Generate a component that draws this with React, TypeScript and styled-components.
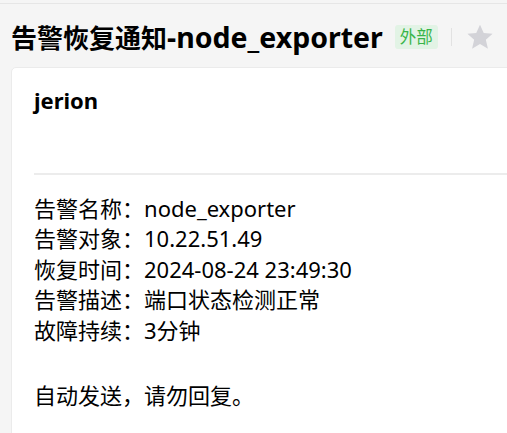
import React from 'react';
import styled, { createGlobalStyle } from 'styled-components';

const GlobalStyle = createGlobalStyle`
  html, body {
    margin: 0;
    padding: 0;
    background: #f5f5f5;
    overflow: hidden;
  }
  body {
    font-family: "Noto Sans", "Noto Sans CJK SC", sans-serif;
    color: #000;
  }
`;

const Page = styled.div`
  border-top: 1px solid #e6e6e6;
  margin-top: 3px;
  height: 430px;
  overflow: hidden;
`;

const Header = styled.div`
  display: flex;
  align-items: center;
  padding: 15px 11px 0 11px;
  height: 36px;

  & > * {
    flex-shrink: 0;
  }
`;

const Title = styled.h1`
  margin: 0;
  font-size: 26px;
  font-weight: 700;
  line-height: 36px;
  white-space: nowrap;
`;

// latin part of the subject renders wider than the CJK part
const TitleLatin = styled.span`
  font-size: 28.5px;
`;

const Badge = styled.span`
  margin-left: 12px;
  padding: 0 5px;
  height: 24px;
  line-height: 24px;
  font-size: 16.5px;
  white-space: nowrap;
  color: #39b54a;
  background: #e2f3e5;
  border-radius: 3px;
`;

const Divider = styled.span`
  width: 1px;
  height: 18px;
  margin: 0 14px 0 13px;
  background: #e2e2e2;
`;

const Star = styled.svg`
  width: 28px;
  height: 28px;
  fill: #d3d3d8;
`;

const Card = styled.div`
  margin: 12px -20px 0 11px;
  background: #fff;
  border: 1px solid #ebebeb;
  border-radius: 5px;
  padding: 17px 0 40px 22px;
`;

const Sender = styled.div`
  font-size: 22px;
  font-weight: 700;
  line-height: 30px;
  height: 88px;
`;

const Rule = styled.hr`
  margin: 0 0 18px 0;
  border: none;
  height: 2px;
  background: #ececec;
`;

const Body = styled.div`
  font-size: 22px;
  line-height: 30.4px;
`;

const Line = styled.div<{ $gap?: boolean }>`
  margin-top: ${p => (p.$gap ? '35px' : '0')};
  white-space: nowrap;
`;

const rows: [string, string][] = [
  ['告警名称', 'node_exporter'],
  ['告警对象', '10.22.51.49'],
  ['恢复时间', '2024-08-24 23:49:30'],
  ['告警描述', '端口状态检测正常'],
  ['故障持续', '3分钟'],
];

const App = () => {
  return (
    <Page>
      <GlobalStyle />
      <Header>
        <Title>告警恢复通知<TitleLatin>-node_exporter</TitleLatin></Title>
        <Badge>外部</Badge>
        <Divider />
        <Star viewBox="0 0 24 24">
          <path d="M12 1.5l3.2 7.1 7.6.7-5.8 5.1 1.8 7.6L12 18l-6.8 4 1.8-7.6-5.8-5.1 7.6-.7z" />
        </Star>
      </Header>
      <Card>
        <Sender>jerion</Sender>
        <Rule />
        <Body>
          {rows.map(([k, v]) => (
            <Line key={k}>{k}：{v}</Line>
          ))}
          <Line $gap>自动发送，请勿回复。</Line>
        </Body>
      </Card>
    </Page>
  );
};

export default App;
